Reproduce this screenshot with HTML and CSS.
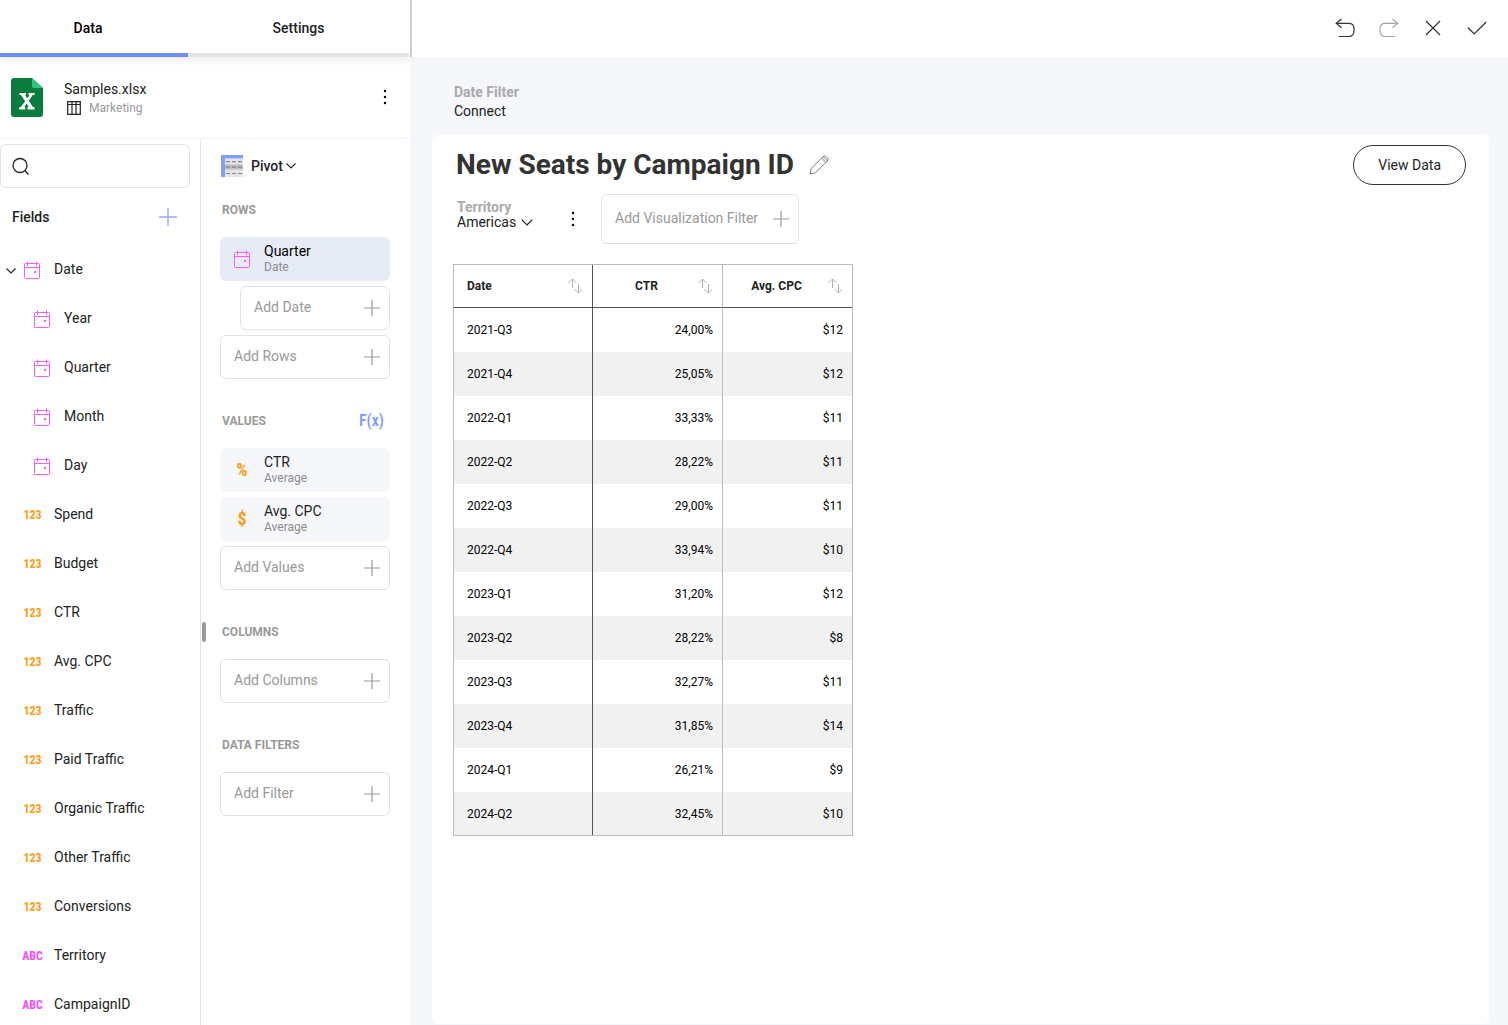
FILE: index.html
```html
<!DOCTYPE html>
<html lang="en">
<head>
<meta charset="utf-8">
<meta name="viewport" content="width=device-width, initial-scale=1">
<title>New Seats by Campaign ID</title>
<link rel="stylesheet" href="styles.css">
</head>
<body>
<svg class="sprite" aria-hidden="true">
  <symbol id="calendar" viewBox="0 0 16 18"><path d="M1.500 2.500h13a1 1 0 0 1 1 1v13a1 1 0 0 1-1 1h-13a1 1 0 0 1-1-1v-13a1 1 0 0 1 1-1zM.5 6.500h15M3.500 .5V5M12.500 .5V5" fill="none" stroke="currentColor"/><path d="M10 10h2v2h-2z" fill="currentColor"/></symbol>
  <symbol id="plus" viewBox="0 0 16 16"><path d="M8 0v16M0 8h16" fill="none" stroke="currentColor" stroke-width="1.200"/></symbol>
  <symbol id="chevron" viewBox="0 0 10 6"><path d="M.5.5 5 5 9.500.5" fill="none" stroke="currentColor" stroke-width="1.100"/></symbol>
  <symbol id="dots" viewBox="0 0 4 16"><circle cx="2" cy="2" r="1.200"/><circle cx="2" cy="8" r="1.200"/><circle cx="2" cy="14" r="1.200"/></symbol>
  <symbol id="sort" viewBox="0 0 14 16"><path d="M4.500 10V1M.5 5l4-4 4 4M10.500 6v9M6.500 11l4 4 4-4" fill="none" stroke="currentColor" stroke-width=".9"/></symbol>
</svg>
<div class="app">
  <aside class="sidebar">
    <nav class="tabs">
      <button class="tab tab-active" type="button">Data</button>
      <button class="tab" type="button">Settings</button>
    </nav>
    <section class="source">
      <svg class="source-icon" viewBox="0 0 32 39" aria-hidden="true"><path d="M3 0h18l11 10v26a3 3 0 0 1-3 3H3a3 3 0 0 1-3-3V3a3 3 0 0 1 3-3z" fill="#0a7d3e"/><path d="M21 0l11 10H23a2 2 0 0 1-2-2z" fill="#33c481"/><path d="M8.500 15h6.500v2h-.8l2 3.600 2.300-3.600h-1V15h6v2h-1.700l-4 5.700 4.200 6.300H23.500v2.500h-7V29h1.200l-2-3.500-2.500 3.500h1v2.500h-6V29h1.700l4.200-5.800L10 17H8.500z" fill="#fff"/></svg>
      <div class="source-text">
        <div class="source-name">Samples.xlsx</div>
        <div class="source-sheet"><svg viewBox="0 0 14 14" aria-hidden="true"><path d="M.7.7h12.600v12.600H.7zM.7 3.500h12.600M5 .7v12.600M9 .7v12.600" fill="none" stroke="#222" stroke-width="1.200"/></svg>Marketing</div>
      </div>
      <button class="icon-button menu" type="button" aria-label="Data source menu"><svg><use href="#dots"/></svg></button>
    </section>
    <div class="panels">
      <section class="fields">
        <label class="search"><svg viewBox="0 0 18 18" aria-hidden="true"><path d="M15 8.500a7 7 0 1 1-14 0 7 7 0 0 1 14 0zM12.800 13.500l3.700 4" fill="none" stroke="#222" stroke-width="1.300"/></svg><input type="search" aria-label="Search fields"></label>
        <div class="fields-head"><h2>Fields</h2><button class="icon-button add-field" type="button" aria-label="Add field"><svg><use href="#plus"/></svg></button></div>
        <ul class="field-list">
          <li><button class="expander" type="button" aria-label="Collapse Date"><svg class="chevron"><use href="#chevron"/></svg></button><svg class="calendar"><use href="#calendar"/></svg><span>Date</span></li>
          <li class="child"><svg class="calendar"><use href="#calendar"/></svg><span>Year</span></li>
          <li class="child"><svg class="calendar"><use href="#calendar"/></svg><span>Quarter</span></li>
          <li class="child"><svg class="calendar"><use href="#calendar"/></svg><span>Month</span></li>
          <li class="child"><svg class="calendar"><use href="#calendar"/></svg><span>Day</span></li>
          <li><i class="type number">123</i><span>Spend</span></li>
          <li><i class="type number">123</i><span>Budget</span></li>
          <li><i class="type number">123</i><span>CTR</span></li>
          <li><i class="type number">123</i><span>Avg. CPC</span></li>
          <li><i class="type number">123</i><span>Traffic</span></li>
          <li><i class="type number">123</i><span>Paid Traffic</span></li>
          <li><i class="type number">123</i><span>Organic Traffic</span></li>
          <li><i class="type number">123</i><span>Other Traffic</span></li>
          <li><i class="type number">123</i><span>Conversions</span></li>
          <li><i class="type string">ABC</i><span>Territory</span></li>
          <li><i class="type string">ABC</i><span>CampaignID</span></li>
        </ul>
      </section>
      <section class="shelves">
        <span class="grip"></span>
        <button class="visual" type="button"><svg class="pivot" viewBox="0 0 22 22" aria-hidden="true"><path d="M4 4h18v18H4z" fill="#e4e4e4"/><path d="M4 9.500h18v5H4z" fill="#bdbdbd"/><path d="M0 0h22v3.500H4V22H0z" fill="#839dfb"/><path d="M5 6.700h16M5 12.200h16M5 18.500h16" stroke="#8a8a8a" stroke-width="1.200" stroke-dasharray="4 2"/></svg>Pivot<svg class="chevron"><use href="#chevron"/></svg></button>
        <div class="shelf">
          <h3>ROWS</h3>
          <button class="pill pill-active" type="button"><svg class="calendar"><use href="#calendar"/></svg><span class="pill-text">Quarter<small>Date</small></span></button>
          <button class="add nested" type="button"><span>Add Date</span><svg><use href="#plus"/></svg></button>
          <button class="add" type="button"><span>Add Rows</span><svg><use href="#plus"/></svg></button>
        </div>
        <div class="shelf">
          <h3>VALUES<button class="formula" type="button">F(x)</button></h3>
          <button class="pill" type="button"><i class="symbol">%</i><span class="pill-text">CTR<small>Average</small></span></button>
          <button class="pill" type="button"><i class="symbol">$</i><span class="pill-text">Avg. CPC<small>Average</small></span></button>
          <button class="add" type="button"><span>Add Values</span><svg><use href="#plus"/></svg></button>
        </div>
        <div class="shelf">
          <h3>COLUMNS</h3>
          <button class="add" type="button"><span>Add Columns</span><svg><use href="#plus"/></svg></button>
        </div>
        <div class="shelf">
          <h3>DATA FILTERS</h3>
          <button class="add" type="button"><span>Add Filter</span><svg><use href="#plus"/></svg></button>
        </div>
      </section>
    </div>
  </aside>
  <main class="main">
    <header class="toolbar">
      <button class="tool" type="button" aria-label="Undo"><svg viewBox="0 0 20 20"><path d="M6.500 1 1.200 5.300l5.300 4.500M1.200 5.300h12.300c3.500 0 5.500 1.500 5.500 5v2.200c0 4-1.500 6-5 6H4" fill="none" stroke="currentColor" stroke-width="1.200"/></svg></button>
      <button class="tool" type="button" aria-label="Redo" disabled><svg viewBox="0 0 20 20"><path d="m13.500 1 5.300 4.300-5.300 4.500M18.800 5.300H6.500C3 5.300 1 6.800 1 10.300v2.200c0 4 1.500 6 5 6h10" fill="none" stroke="currentColor" stroke-width="1.200"/></svg></button>
      <button class="tool" type="button" aria-label="Close"><svg viewBox="0 0 20 20"><path d="m3 3 14 14M17 3 3 17" fill="none" stroke="currentColor" stroke-width="1.200"/></svg></button>
      <button class="tool" type="button" aria-label="Save"><svg viewBox="0 0 20 20"><path d="m.8 9.500 6.400 6.500L19.200 4" fill="none" stroke="currentColor" stroke-width="1.200"/></svg></button>
    </header>
    <div class="date-filter"><span class="caption">Date Filter</span><button class="plain" type="button">Connect</button></div>
    <section class="card">
      <div class="title-row">
        <h1>New Seats by Campaign ID</h1>
        <button class="icon-button edit" type="button" aria-label="Edit title"><svg viewBox="0 0 20 20"><path d="M1 19l1.200-5.500L14 1.700a2.400 2.400 0 0 1 3.400 0l.9.900a2.400 2.400 0 0 1 0 3.400L6.500 17.800 1 19zM12.600 3.100l4.300 4.300M14.200 1.600l4.200 4.200" fill="none" stroke="#777" stroke-width="1"/></svg></button>
        <button class="view-data" type="button">View Data</button>
      </div>
      <div class="filter-row">
        <div class="filter"><span class="caption">Territory</span><button class="plain" type="button">Americas<svg class="chevron"><use href="#chevron"/></svg></button></div>
        <button class="icon-button" type="button" aria-label="Filter menu"><svg><use href="#dots"/></svg></button>
        <button class="add add-filter" type="button"><span>Add Visualization Filter</span><svg><use href="#plus"/></svg></button>
      </div>
      <table class="pivot-table">
        <thead><tr>
          <th scope="col"><button type="button"><span>Date</span><svg><use href="#sort"/></svg></button></th>
          <th scope="col"><button type="button"><span>CTR</span><svg><use href="#sort"/></svg></button></th>
          <th scope="col"><button type="button"><span>Avg. CPC</span><svg><use href="#sort"/></svg></button></th>
        </tr></thead>
        <tbody>
          <tr><td>2021-Q3</td><td>24,00%</td><td>$12</td></tr>
          <tr><td>2021-Q4</td><td>25,05%</td><td>$12</td></tr>
          <tr><td>2022-Q1</td><td>33,33%</td><td>$11</td></tr>
          <tr><td>2022-Q2</td><td>28,22%</td><td>$11</td></tr>
          <tr><td>2022-Q3</td><td>29,00%</td><td>$11</td></tr>
          <tr><td>2022-Q4</td><td>33,94%</td><td>$10</td></tr>
          <tr><td>2023-Q1</td><td>31,20%</td><td>$12</td></tr>
          <tr><td>2023-Q2</td><td>28,22%</td><td>$8</td></tr>
          <tr><td>2023-Q3</td><td>32,27%</td><td>$11</td></tr>
          <tr><td>2023-Q4</td><td>31,85%</td><td>$14</td></tr>
          <tr><td>2024-Q1</td><td>26,21%</td><td>$9</td></tr>
          <tr><td>2024-Q2</td><td>32,45%</td><td>$10</td></tr>
        </tbody>
      </table>
    </section>
  </main>
</div>
</body>
</html>
```
FILE: styles.css
```css
*, *::before, *::after { box-sizing: border-box; }
body {
  margin: 0;
  font: 14px/18px Roboto, "Liberation Sans", sans-serif;
  color: #222;
  background: #f5f7fb;
}
button, input { font: inherit; color: inherit; background: none; border: 0; padding: 0; margin: 0; }
button { cursor: pointer; text-align: left; }
h1, h2, h3, ul { margin: 0; padding: 0; }
ul { list-style: none; }
i { font-style: normal; }
svg { display: block; flex: none; }
.sprite { display: none; }

.app { display: grid; grid-template-columns: 410px minmax(0, 1fr); height: 100vh; }

/* Sidebar */
.sidebar { display: flex; flex-direction: column; min-height: 0; background: #fff; }
.tabs { display: flex; padding-right: 1px; box-shadow: 0 3px 8px rgba(0, 0, 0, .08); }
.tab { flex: 1; height: 57px; padding-top: 3px; text-align: center; font-weight: 500; border-bottom: 4px solid #e4e4e4; }
.tab-active { flex: 0 0 188px; padding-right: 12px; color: #000; border-color: #6f8cfb; }

.source { display: flex; align-items: center; height: 82px; padding: 0 14px 0 11px; border-bottom: 2px solid #f5f7fb; }
.source-icon { width: 32px; height: 39px; }
.source-text { flex: 1; padding: 2px 0 0 21px; }
.source-name { line-height: 20px; }
.source-sheet { display: flex; align-items: center; gap: 8px; padding-left: 3px; font-size: 12px; color: #999; }
.source-sheet svg { width: 14px; height: 14px; }
.icon-button { display: grid; place-items: center; width: 22px; height: 32px; }
.icon-button svg { width: 4px; height: 16px; }

.panels { display: grid; grid-template-columns: 201px minmax(0, 1fr); flex: 1; min-height: 0; }
.fields { display: flex; flex-direction: column; min-height: 0; border-right: 1px solid #e4e4e4; }
.search { display: flex; align-items: center; gap: 10px; height: 44px; margin: 5px 10px 0 0; padding: 0 11px; border: 1px solid #e4e4e4; border-radius: 6px; }
.search svg { width: 18px; height: 18px; }
.search input { min-width: 0; flex: 1; outline: 0; }
.fields-head { display: flex; align-items: center; justify-content: space-between; height: 57px; padding: 0 22px 0 12px; }
.fields-head h2 { font-size: 14px; font-weight: 500; }
.fields-head .add-field { width: 20px; height: 20px; color: #93a9fb; }
.fields-head .add-field svg { width: 18px; height: 18px; }
.field-list { flex: 1; min-height: 0; overflow-y: auto; scrollbar-width: none; }
.field-list li { display: flex; align-items: center; height: 49px; padding-left: 21px; }
.field-list li span { padding-bottom: 2px; }
.field-list li:first-child { padding-left: 24px; }
.field-list .child { padding-left: 34px; }
.calendar { width: 16px; height: 18px; margin-right: 14px; color: #f65df6; }
.expander { width: 18px; height: 18px; margin-left: -18px; padding-top: 3px; }
.chevron { width: 10px; height: 6px; }
.type { width: 23px; margin-right: 10px; text-align: center; font: 700 12px/18px "Roboto Condensed", Roboto, sans-serif; }
.number { color: #ff9b0f; }
.string { color: #f64df6; }

.shelves { position: relative; padding: 16px 20px 0 19px; }
.grip { position: absolute; left: 1px; top: 483px; width: 4px; height: 20px; border-radius: 2px; background: #999; }
.visual { display: flex; align-items: center; gap: 3px; height: 22px; font-weight: 500; }
.pivot { width: 22px; height: 22px; margin: 0 5px 0 1px; }
.shelf { display: flex; flex-direction: column; gap: 5px; margin-bottom: 34px; }
.visual + .shelf { margin-top: 25px; }
.shelf h3 { display: flex; align-items: center; justify-content: space-between; height: 16px; margin-bottom: 14px; padding: 0 6px 0 2px; font-size: 12px; font-weight: 700; color: #999; }
.formula { font: 500 16px/18px "Roboto Condensed", Roboto, sans-serif; color: #7c97fb; }
.pill { display: flex; align-items: center; height: 44px; padding-left: 14px; border-radius: 6px; background: #f5f7fb; }
.pill-active { background: #e7ebf5; color: #000; }
.pill-text { padding-bottom: 2px; }
.pill-text small { display: block; font-size: 12px; line-height: 14px; color: #8c8c8c; }
.symbol { width: 16px; margin-right: 14px; text-align: center; font: 700 18px/18px "Roboto Condensed", Roboto, sans-serif; color: #ff9b0f; }
.add { display: flex; align-items: center; justify-content: space-between; height: 44px; padding: 0 9px 0 13px; border: 1px solid #e2e2e2; border-radius: 6px; color: #999; }
.add span { padding-bottom: 2px; }
.add svg { width: 16px; height: 16px; }
.nested { margin-left: 20px; }

/* Editor */
.main { display: flex; flex-direction: column; min-width: 0; min-height: 0; }
.toolbar { display: flex; justify-content: flex-end; height: 57px; padding: 0 9px 2px 0; border-left: 2px solid #ccc; background: #fff; }
.tool { display: grid; place-items: center; width: 44px; color: #333; }
.tool:disabled { color: #a5a5a5; }
.tool svg { width: 20px; height: 20px; }
.caption { display: block; font-weight: 700; color: #aaa; }
.plain { display: flex; align-items: center; gap: 5px; }
.date-filter { padding: 26px 44px 15px; }
.date-filter .caption { margin-bottom: 1px; }
.card { flex: 1; margin: 0 19px 1px 22px; padding: 10px 23px 10px 21px; border-radius: 6px; background: #fff; overflow: auto; }
.title-row { display: flex; align-items: center; padding-left: 3px; }
.title-row h1 { font-size: 28px; line-height: 40px; font-weight: 700; color: #333; }
.title-row .edit { margin-left: 14px; }
.edit svg { width: 20px; height: 20px; }
.view-data { height: 40px; margin-left: auto; padding: 0 24px; border: 1px solid #333; border-radius: 20px; }
.filter-row { display: flex; align-items: center; height: 50px; margin: 9px 0 20px; padding-left: 4px; }
.filter { width: 105px; padding-bottom: 8px; }
.filter .caption, .filter .plain { line-height: 15px; }
.filter .chevron { width: 12px; height: 7px; }
.filter-row .add-filter { height: 50px; gap: 15px; margin-left: 17px; }

.pivot-table { width: 400px; table-layout: fixed; border-spacing: 0; border: solid #bbb; border-width: 1px 1px 1px 0; font-size: 12px; }
.pivot-table th, .pivot-table td { height: 44px; padding: 0 9px 0 0; border-left: 1px solid #bbb; text-align: right; color: #000; }
.pivot-table th { height: 43px; padding-right: 10px; border-bottom: 1px solid #555; color: #222; font-weight: 700; }
.pivot-table th:first-child { width: 139px; }
.pivot-table tr :first-child:is(th, td) { padding-left: 13px; text-align: left; }
.pivot-table tr :nth-child(2):is(th, td) { border-left-color: #555; }
.pivot-table tbody tr:nth-child(even) { background: #f1f1f1; }
.pivot-table tbody tr:last-child td { height: 43px; }
.pivot-table th button { display: flex; align-items: center; width: 100%; }
.pivot-table th span { flex: 1; padding-left: 2px; text-align: center; }
.pivot-table th:first-child span { padding-left: 0; text-align: left; }
.pivot-table th svg { width: 14px; height: 16px; color: #aaa; overflow: visible; }
```
